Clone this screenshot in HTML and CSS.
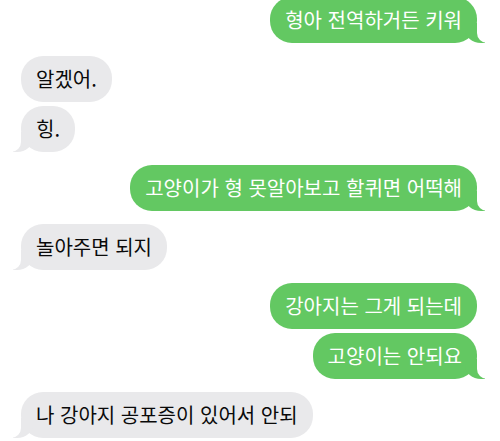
FILE: index.html
```html
<!DOCTYPE html>
<html lang="ko">
<head>
<meta charset="utf-8">
<link rel="stylesheet" href="styles.css">
</head>
<body>
<div class="chat">
  <div class="group">
    <div class="bubble out tail">형아 전역하거든 키워</div>
  </div>
  <div class="group">
    <div class="bubble in">알겠어.</div>
    <div class="bubble in tail">힝.</div>
  </div>
  <div class="group">
    <div class="bubble out tail">고양이가 형 못알아보고 할퀴면 어떡해</div>
  </div>
  <div class="group">
    <div class="bubble in tail">놀아주면 되지</div>
  </div>
  <div class="group">
    <div class="bubble out">강아지는 그게 되는데</div>
    <div class="bubble out tail">고양이는 안되요</div>
  </div>
  <div class="group">
    <div class="bubble in tail">나 강아지 공포증이 있어서 안되</div>
  </div>
</div>
</body>
</html>
```
FILE: styles.css
```css
html, body {
  margin: 0;
  padding: 0;
  background: #ffffff;
  overflow: hidden;
}

.chat {
  width: 500px;
  height: 441px;
  box-sizing: border-box;
  padding: 0 23px 0 21px;
  margin-top: -3px;
  display: flex;
  flex-direction: column;
  gap: 13px;
  font-family: "Noto Sans CJK KR", "Noto Sans", sans-serif;
  font-size: 20px;
}

.group {
  display: flex;
  flex-direction: column;
  gap: 4px;
}

.bubble {
  position: relative;
  height: 46px;
  line-height: 46px;
  padding: 0 15px;
  border-radius: 22px;
  white-space: nowrap;
}

.bubble.out {
  align-self: flex-end;
  background: #63c862;
  color: #ffffff;
}

.bubble.in {
  align-self: flex-start;
  background: #e9e9eb;
  color: #0a0a0a;
}

.bubble.tail::before,
.bubble.tail::after {
  content: "";
  position: absolute;
  bottom: 0;
  height: 20px;
}

.bubble.out.tail::before {
  right: -8px;
  width: 20px;
  background: #63c862;
  border-bottom-left-radius: 16px 14px;
}

.bubble.out.tail::after {
  right: -10px;
  width: 10px;
  background: #ffffff;
  border-bottom-left-radius: 10px;
}

.bubble.in.tail::before {
  left: -8px;
  width: 20px;
  background: #e9e9eb;
  border-bottom-right-radius: 16px 14px;
}

.bubble.in.tail::after {
  left: -10px;
  width: 10px;
  background: #ffffff;
  border-bottom-right-radius: 10px;
}
```
